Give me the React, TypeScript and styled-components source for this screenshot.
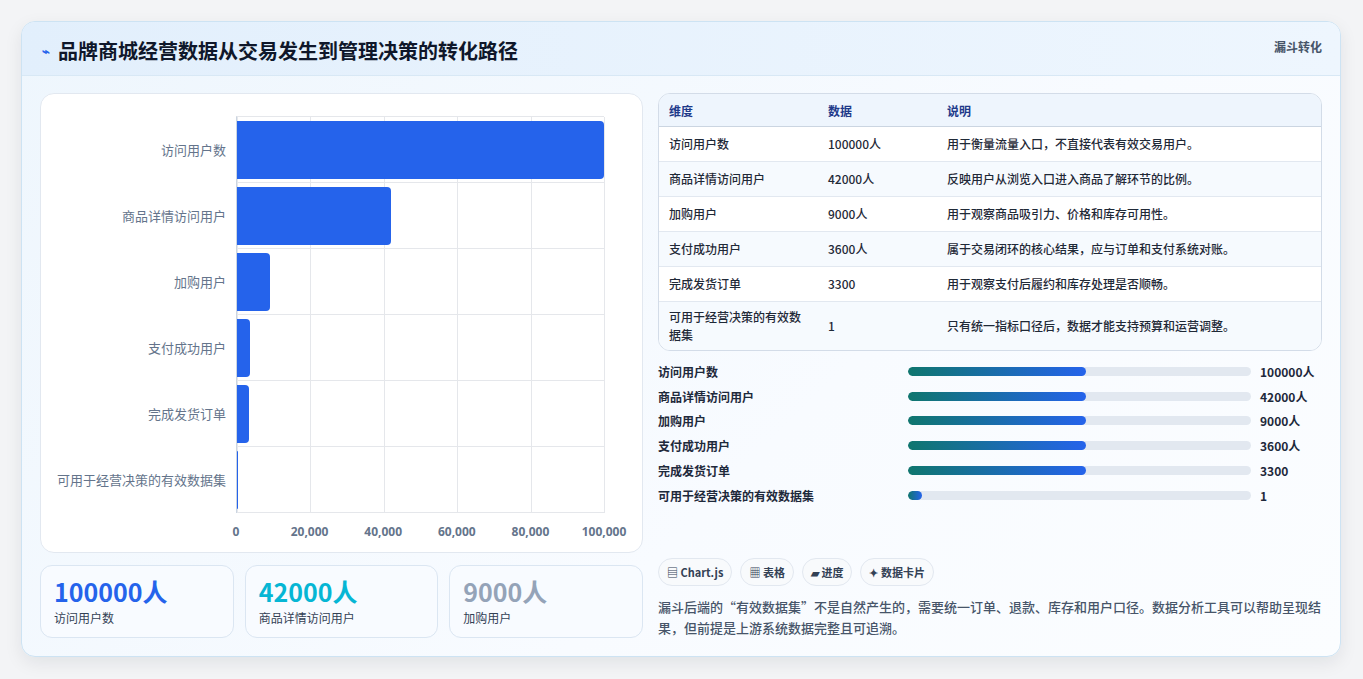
import React from "react";
import styled, { createGlobalStyle } from "styled-components";

const GlobalStyle = createGlobalStyle`
  html, body { margin: 0; padding: 0; background: #f3f4f6; }
  body { font-family: "Noto Sans CJK SC", "Noto Sans", sans-serif; }
`;

type Row = { name: string; value: number; unit: string; note: string };

const rows: Row[] = [
  { name: "访问用户数", value: 100000, unit: "人", note: "用于衡量流量入口，不直接代表有效交易用户。" },
  { name: "商品详情访问用户", value: 42000, unit: "人", note: "反映用户从浏览入口进入商品了解环节的比例。" },
  { name: "加购用户", value: 9000, unit: "人", note: "用于观察商品吸引力、价格和库存可用性。" },
  { name: "支付成功用户", value: 3600, unit: "人", note: "属于交易闭环的核心结果，应与订单和支付系统对账。" },
  { name: "完成发货订单", value: 3300, unit: "", note: "用于观察支付后履约和库存处理是否顺畅。" },
  { name: "可用于经营决策的有效数据集", value: 1, unit: "", note: "只有统一指标口径后，数据才能支持预算和运营调整。" },
];

const progressWidth = [52, 52, 52, 52, 52, 4];

export default function App() {
  return (
    <Page>
      <GlobalStyle />
      <Card>
        <Header>
          <Title>
            <TitleIcon>⌁</TitleIcon>品牌商城经营数据从交易发生到管理决策的转化路径
          </Title>
          <Tag>漏斗转化</Tag>
        </Header>
        <Body>
          <LeftCol>
            <ChartBox>
              <ChartGrid>
                <Labels>
                  {rows.map((r) => (
                    <Label key={r.name}>{r.name}</Label>
                  ))}
                </Labels>
                <Plot>
                  {[0, 1, 2, 3, 4, 5].map((i) => (
                    <VLine key={i} style={{ left: `${i * 20}%` }} />
                  ))}
                  {rows.map((r) => (
                    <BarRow key={r.name}>
                      <Bar style={{ width: `${(r.value / 100000) * 100}%` }} />
                    </BarRow>
                  ))}
                </Plot>
                <span />
                <Axis>
                  {["0", "20,000", "40,000", "60,000", "80,000", "100,000"].map((t, i) => (
                    <Tick key={t} style={{ left: `${i * 20}%` }}>{t}</Tick>
                  ))}
                </Axis>
              </ChartGrid>
            </ChartBox>
            <Kpis>
              <Kpi><KpiValue $color="#2563eb">100000人</KpiValue><KpiLabel>访问用户数</KpiLabel></Kpi>
              <Kpi><KpiValue $color="#06b6d4">42000人</KpiValue><KpiLabel>商品详情访问用户</KpiLabel></Kpi>
              <Kpi><KpiValue $color="#94a3b8">9000人</KpiValue><KpiLabel>加购用户</KpiLabel></Kpi>
            </Kpis>
          </LeftCol>
          <RightCol>
            <TableWrap>
              <Table>
                <colgroup>
                  <col style={{ width: 159 }} />
                  <col style={{ width: 119 }} />
                  <col />
                </colgroup>
                <thead>
                  <tr><Th>维度</Th><Th>数据</Th><Th>说明</Th></tr>
                </thead>
                <tbody>
                  {rows.map((r, i) => (
                    <Tr key={r.name} $alt={i % 2 === 1}>
                      <Td>{r.name}</Td>
                      <Td>{r.value}{r.unit}</Td>
                      <Td>{r.note}</Td>
                    </Tr>
                  ))}
                </tbody>
              </Table>
            </TableWrap>
            <ProgressList>
              {rows.map((r, i) => (
                <ProgressRow key={r.name}>
                  <PLabel>{r.name}</PLabel>
                  <Track><Fill style={{ width: `${progressWidth[i]}%` }} /></Track>
                  <PValue>{r.value}{r.unit}</PValue>
                </ProgressRow>
              ))}
            </ProgressList>
            <Spacer />
            <Chips>
              <Chip>▤ Chart.js</Chip>
              <Chip>▦ 表格</Chip>
              <Chip>▰ 进度</Chip>
              <Chip>✦ 数据卡片</Chip>
            </Chips>
            <Para>
              漏斗后端的“有效数据集”不是自然产生的，需要统一订单、退款、库存和用户口径。数据分析工具可以帮助呈现结果，但前提是上游系统数据完整且可追溯。
            </Para>
          </RightCol>
        </Body>
      </Card>
    </Page>
  );
}

const Page = styled.div`
  padding: 21px;
  height: 679px;
  box-sizing: border-box;
`;

const Card = styled.div`
  width: 1320px;
  height: 636px;
  box-sizing: border-box;
  border: 1px solid #cde3f3;
  border-radius: 14px;
  background: linear-gradient(135deg, #eef6fd 0%, #f8fbff 60%, #fbfdff 100%);
  box-shadow: 0 6px 18px rgba(15, 23, 42, 0.08);
  overflow: hidden;
  display: flex;
  flex-direction: column;
`;

const Header = styled.div`
  height: 53px;
  flex-shrink: 0;
  background: linear-gradient(90deg, #e2effc, #eef6fe);
  border-bottom: 1px solid #d8e8f5;
  display: flex;
  align-items: flex-start;
  justify-content: space-between;
  padding: 0 18px 0 20px;
`;

const Title = styled.h1`
  margin: 14px 0 0;
  font-size: 20px;
  font-weight: 700;
  color: #0f172a;
  display: flex;
  align-items: center;
  gap: 8px;
`;

const TitleIcon = styled.span`
  color: #2563eb;
  font-size: 13px;
`;

const Tag = styled.span`
  margin-top: 16px;
  font-size: 12px;
  font-weight: 700;
  color: #475569;
`;

const Body = styled.div`
  flex: 1;
  display: flex;
  gap: 15px;
  padding: 17px 18px 18px 18px;
  min-height: 0;
`;

const LeftCol = styled.div`
  width: 603px;
  display: flex;
  flex-direction: column;
  gap: 12px;
`;

const ChartBox = styled.div`
  height: 461px;
  box-sizing: border-box;
  background: #fff;
  border: 1px solid #e2e8f0;
  border-radius: 14px;
  padding: 22px 38px 0 14px;
`;

const ChartGrid = styled.div`
  display: grid;
  grid-template-columns: 181px 1fr;
  grid-template-rows: 397px 30px;
`;

const Labels = styled.div`
  display: flex;
  flex-direction: column;
`;

const Label = styled.div`
  flex: 1;
  display: flex;
  align-items: center;
  justify-content: flex-end;
  padding-right: 10px;
  font-size: 13px;
  color: #64748b;
`;

const Plot = styled.div`
  position: relative;
  border-left: 1px solid #cbd5e1;
  border-top: 1px solid #e5e7eb;
  display: flex;
  flex-direction: column;
`;

const VLine = styled.div`
  position: absolute;
  top: 0;
  bottom: 0;
  width: 1px;
  background: #e5e7eb;
`;

const BarRow = styled.div`
  flex: 1;
  display: flex;
  align-items: center;
  border-bottom: 1px solid #e5e7eb;
  position: relative;
`;

const Bar = styled.div`
  height: 58px;
  background: #2563eb;
  border-radius: 0 4px 4px 0;
  min-width: 1px;
`;

const Axis = styled.div`
  position: relative;
`;

const Tick = styled.span`
  position: absolute;
  top: 10px;
  transform: translateX(-50%);
  font-size: 12px;
  font-weight: 700;
  color: #64748b;
  font-family: "Open Sans", sans-serif;
`;

const Kpis = styled.div`
  display: grid;
  grid-template-columns: repeat(3, 1fr);
  gap: 11px;
`;

const Kpi = styled.div`
  height: 73px;
  box-sizing: border-box;
  background: #f8fbff;
  border: 1px solid #dbe6f2;
  border-radius: 12px;
  padding: 9px 13px;
`;

const KpiValue = styled.div<{ $color: string }>`
  font-size: 25px;
  font-weight: 700;
  line-height: 32px;
  color: ${(p) => p.$color};
`;

const KpiLabel = styled.div`
  font-size: 12px;
  color: #334155;
  margin-top: 2px;
`;

const RightCol = styled.div`
  flex: 1;
  display: flex;
  flex-direction: column;
`;

const TableWrap = styled.div`
  border: 1px solid #d3dce8;
  border-radius: 12px;
  overflow: hidden;
  background: #fff;
`;

const Table = styled.table`
  width: 100%;
  table-layout: fixed;
  border-collapse: collapse;
  font-size: 12px;
`;

const Th = styled.th`
  text-align: left;
  height: 32px;
  padding: 0 10px;
  background: #eef5fd;
  color: #1e3a8a;
  font-weight: 700;
  border-bottom: 1px solid #cbd5e1;
`;

const Tr = styled.tr<{ $alt: boolean }>`
  background: ${(p) => (p.$alt ? "#f6fafe" : "#fff")};
  border-bottom: 1px solid #e2e8f0;
  &:last-child { border-bottom: none; }
`;

const Td = styled.td`
  height: 35px;
  padding: 6px 10px;
  box-sizing: border-box;
  color: #1f2937;
  font-weight: 500;
  line-height: 18px;
  vertical-align: middle;
`;

const ProgressList = styled.div`
  margin-top: 8px;
  display: flex;
  flex-direction: column;
`;

const ProgressRow = styled.div`
  height: 24.8px;
  display: grid;
  grid-template-columns: 241px 1fr 62px;
  align-items: center;
  gap: 0 9px;
`;

const PLabel = styled.span`
  font-size: 12px;
  font-weight: 700;
  color: #1e293b;
`;

const Track = styled.div`
  height: 9px;
  background: #e2e8f0;
  border-radius: 5px;
  overflow: hidden;
`;

const Fill = styled.div`
  height: 100%;
  border-radius: 5px;
  background: linear-gradient(90deg, #0f766e, #2563eb);
`;

const PValue = styled.span`
  font-size: 12px;
  font-weight: 700;
  color: #1e293b;
`;

const Spacer = styled.div`
  flex: 1;
`;

const Chips = styled.div`
  display: flex;
  gap: 8px;
`;

const Chip = styled.span`
  height: 28px;
  box-sizing: border-box;
  padding: 0 8px;
  display: inline-flex;
  align-items: center;
  border: 1px solid #e2e8f0;
  border-radius: 14px;
  background: #f8fafc;
  font-size: 11px;
  font-weight: 700;
  color: #334155;
`;

const Para = styled.p`
  margin: 10px 0 0;
  font-size: 13px;
  line-height: 21px;
  color: #475569;
  font-weight: 500;
`;
